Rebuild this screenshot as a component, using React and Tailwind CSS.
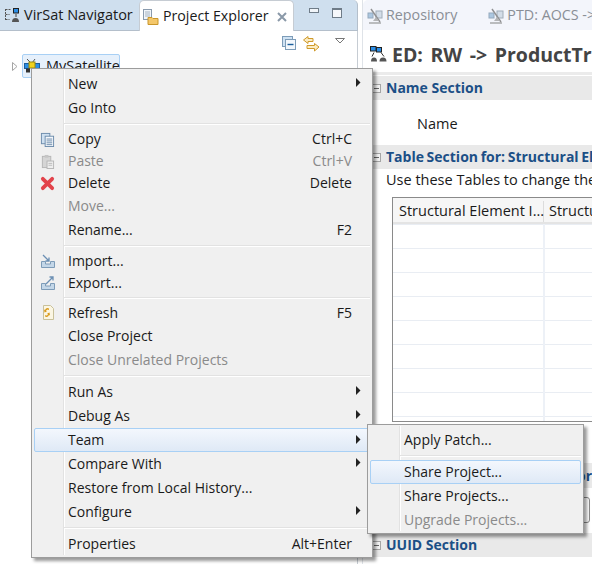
const font = { fontFamily: '"Open Sans", "Noto Sans", sans-serif' };

function Arrow() {
  return <svg width="6" height="9" viewBox="0 0 6 9" className="absolute right-[9px] top-[6px]"><path d="M1 0 L5.5 4.5 L1 9 Z" fill="#222" /></svg>;
}

function CopyIcon() {
  return (
    <svg width="15" height="15" viewBox="0 0 16 16">
      <rect x="1.5" y="1.5" width="9" height="11" fill="#cfe0f0" stroke="#6b8bab" />
      <rect x="5.5" y="4.5" width="9" height="11" fill="#f4f7fb" stroke="#6b8bab" />
      <path d="M7 7.5h6M7 9.5h6M7 11.5h6M7 13.5h6" stroke="#6b8bab" />
    </svg>
  );
}
function PasteIcon() {
  return (
    <svg width="15" height="15" viewBox="0 0 16 16">
      <rect x="2.5" y="2.5" width="9" height="12" fill="#d5d5d5" stroke="#b5b5b5" />
      <rect x="5" y="1" width="4" height="3" fill="#c5c5c5" />
      <rect x="7.5" y="7.5" width="7" height="8" fill="#eee" stroke="#b5b5b5" />
      <path d="M9 10h4M9 12h4" stroke="#bbb" />
    </svg>
  );
}
function DeleteIcon() {
  return (
    <svg width="15" height="15" viewBox="0 0 16 16">
      <path d="M3 3 L13 13 M13 3 L3 13" stroke="#e2434b" strokeWidth="4" strokeLinecap="round" />
    </svg>
  );
}
function ImportIcon() {
  return (
    <svg width="16" height="16" viewBox="0 0 16 16">
      <path d="M1.5 8.5v6h13v-6h-4v2.5h-5v-2.5z" fill="#c4d7e8" stroke="#7e9cb8" />
      <path d="M3 2 L9 8 M9 4.5v3.5h-3.5" fill="none" stroke="#6b8fb3" strokeWidth="1.3" />
    </svg>
  );
}
function ExportIcon() {
  return (
    <svg width="16" height="16" viewBox="0 0 16 16">
      <path d="M1.5 8.5v6h13v-6h-4v2.5h-5v-2.5z" fill="#c4d7e8" stroke="#7e9cb8" />
      <path d="M6 9 L13 2 M9.5 2h3.5v3.5" fill="none" stroke="#6b8fb3" strokeWidth="1.3" />
    </svg>
  );
}
function RefreshIcon() {
  return (
    <svg width="16" height="16" viewBox="0 0 16 16">
      <path d="M3.5 0.5h7l3 3v11h-10z" fill="#fbf6e3" stroke="#c9c19a" />
      <path d="M9 3.5a3 3 0 0 0-4 1.5l-1-.5 .5 3 2.5-1-1-.5a2 2 0 0 1 3-1z" fill="#d99a1c" />
      <path d="M5 11.5a3 3 0 0 0 4-1.5l1 .5-.5-3-2.5 1 1 .5a2 2 0 0 1-3 1z" fill="#d99a1c" />
    </svg>
  );
}
function NavIcon() {
  return (
    <svg width="16" height="15" viewBox="0 0 16 15" className="shrink-0">
      <path d="M1.5 1v11M1.5 1.5h5M1.5 6.5h4M1.5 11.5h4" stroke="#555" strokeDasharray="2 1" fill="none" />
      <rect x="9.5" y="0.5" width="5" height="4.5" fill="#2b8ee6" stroke="#222" />
      <path d="M12 6v3" stroke="#444" />
      <path d="M8 14 Q8 10 11.5 10 Q15 10 15 14 Z" fill="#555" />
    </svg>
  );
}
function ExplorerIcon() {
  return (
    <svg width="16" height="16" viewBox="0 0 16 16" className="shrink-0">
      <rect x="0.5" y="0.5" width="8" height="10" fill="#f1f5fa" stroke="#8a9bae" />
      <path d="M2 3h5M2 5h5M2 7h5" stroke="#a5b3c2" />
      <path d="M5 8.5h4l1 1h5v6h-10z" fill="#f4c76a" stroke="#c9962b" />
    </svg>
  );
}
function SatIcon() {
  return (
    <svg width="17" height="17" viewBox="0 0 17 17" className="shrink-0">
      <path d="M3 1 L7 5 M11 1 L8 5" stroke="#555" />
      <rect x="0.5" y="5.5" width="5" height="5" fill="#2b8ee6" stroke="#1c5f9e" />
      <rect x="10.5" y="5.5" width="5" height="5" fill="#2b8ee6" stroke="#1c5f9e" />
      <rect x="5" y="4" width="6" height="6" fill="#f1d21e" stroke="#9a8a10" />
      <rect x="2" y="10.5" width="4" height="4" fill="#333" />
      <rect x="7.5" y="11.5" width="7" height="5" fill="#fff" stroke="#555" />
      <path d="M9 13.5h4M9 15h4" stroke="#888" />
    </svg>
  );
}
function DisabledPinIcon() {
  return (
    <svg width="16" height="16" viewBox="0 0 16 16" className="opacity-70 shrink-0">
      <rect x="1" y="5" width="5" height="5" fill="#8fb4d6" stroke="#6f8ba5" />
      <rect x="9" y="3" width="6" height="7" fill="#c6d4e0" stroke="#7f8f9f" />
      <path d="M2 15h12" stroke="#888" strokeWidth="1.5" />
      <path d="M4 1 L13 14" stroke="#666" strokeWidth="1.4" />
      <path d="M6 13l3-4 3 4z" fill="#9a9a9a" />
    </svg>
  );
}
function EdIcon() {
  return (
    <svg width="17" height="17" viewBox="0 0 17 17" className="shrink-0 -mt-[1px]">
      <rect x="0.5" y="0.5" width="5.5" height="4.5" fill="#2b8ee6" stroke="#222" />
      <rect x="6.5" y="1.5" width="5" height="4.5" fill="#2b8ee6" stroke="#222" />
      <path d="M4 6.5l-2 4M11 6.5l3 4" stroke="#333" />
      <path d="M1 15.5 Q1 11.5 4 11.5 Q7 11.5 7 15.5 Z M9.5 15.5 Q9.5 11.5 13 11.5 Q16.5 11.5 16.5 15.5 Z" fill="#555" />
    </svg>
  );
}
function CollapseIcon() {
  return (
    <svg width="9" height="9" viewBox="0 0 9 9" className="shrink-0"><rect x="0.5" y="0.5" width="8" height="8" fill="#f3f3f3" stroke="#a5a5a5" /><path d="M2 4.5h5" stroke="#666" /></svg>
  );
}

function Sep() {
  return <div className="h-[2px] my-[3px] ml-[30px] bg-white border-t border-[#e2e2e2]" />;
}

function Item({ label, shortcut, disabled, arrow, icon, h = "h-[24px]" }) {
  return (
    <div className={"relative flex items-center " + h}>
      <div className="w-[32px] shrink-0 flex justify-center items-center pr-[5px]">{icon}</div>
      <span className={"pl-[2px] " + (disabled ? "text-[#8a8a8a]" : "text-[#1a1a1a]")}>{label}</span>
      {shortcut && <span className={"ml-auto pr-[18px] " + (disabled ? "text-[#8a8a8a]" : "text-[#1a1a1a]")}>{shortcut}</span>}
      {arrow && <Arrow />}
    </div>
  );
}

function Hover({ children }) {
  return (
    <div className="border border-[#a8d0f5] rounded-[2px] bg-gradient-to-b from-[#f3f7fd] to-[#dfe9f6]">
      <div className="-mx-[1px]">{children}</div>
    </div>
  );
}

function Section({ title, className = "", titleClass = "" }) {
  return (
    <div className={"h-[24px] bg-[#e9e9e9] flex items-center gap-[5px] pl-[9px] overflow-hidden shrink-0 text-[14px] " + className}>
      <CollapseIcon />
      <span className={"font-bold text-[#1b4f86] whitespace-nowrap " + titleClass}>{title}</span>
    </div>
  );
}

export default function App() {
  return (
    <div style={font} className="relative w-[592px] h-[564px] overflow-hidden bg-white flex text-[14.5px] text-[#1a1a1a] leading-none">
      {/* Left view */}
      <div className="w-[358px] shrink-0 flex flex-col">
        <div className="h-[31px] flex bg-[#cfdfee] border-b border-r border-[#b4bfcb] rounded-tr-[5px] shrink-0">
          <div className="w-[139px] shrink-0 flex items-center gap-[4px] pl-[4px] pt-[1px]">
            <NavIcon />
            <span className="whitespace-nowrap">VirSat Navigator</span>
          </div>
          <div className="w-[155px] shrink-0 -mb-[1px] h-[31px] flex items-center bg-white border-x border-t border-[#c6ccd3] rounded-t-[5px] pl-[3px] pt-[1px] gap-[4px] text-[14.2px]">
            <ExplorerIcon />
            <span className="whitespace-nowrap">Project Explorer</span>
            <svg width="10" height="10" viewBox="0 0 10 10" className="ml-[4px] shrink-0"><path d="M1 1l8 8M9 1l-8 8" stroke="#8a99a8" strokeWidth="2" fill="none" /></svg>
          </div>
          <div className="flex-1 flex items-start pt-[8px] pl-[15px] gap-[13px]">
            <div className="w-[10px] h-[5px] bg-[#f1f5f9] border border-[#6f7c88]" />
            <div className="w-[10px] h-[10px] bg-[#f6f8fb] border border-[#6f7c88] border-t-2" />
          </div>
        </div>
        <div className="relative flex-1 border-r border-[#c6ccd3]">
          <div className="flex items-start justify-end pr-[12px] pt-[5px] h-[23px]">
            <svg width="14" height="14" viewBox="0 0 14 14"><rect x="0.5" y="0.5" width="10" height="10" fill="#cfe2f3" stroke="#7d9cb8" /><rect x="3.5" y="3.5" width="10" height="10" fill="#f2f7fc" stroke="#7d9cb8" /><path d="M5.5 8.5h6" stroke="#1b5e9c" strokeWidth="1.4" /></svg>
            <svg width="17" height="16" viewBox="0 0 17 16" className="ml-[7px]"><path d="M0.5 4 L5 .5 V2.5 H10 V5.5 H5 V7.5 Z" fill="#fcecc4" stroke="#cf9a2a" /><path d="M16 11 L11.5 7.5 V9.5 H4 V12.5 H11.5 V15 Z" fill="#fcecc4" stroke="#cf9a2a" /></svg>
            <svg width="10" height="6" viewBox="0 0 10 6" className="ml-[15px] mt-[2px]"><path d="M.5 .5h9l-4.5 4.5z" fill="#fff" stroke="#777" /></svg>
          </div>
          <div className="flex items-start pl-[12px]">
            <svg width="6" height="9" viewBox="0 0 6 9" className="mt-[8px]"><path d="M.5 .5 L5 4.5 L.5 8.5 Z" fill="#fff" stroke="#a5a5a5" /></svg>
            <div className="ml-[4px] h-[24px] w-[98px] flex items-center gap-[5px] pl-[1px] border border-[#a8d0f5] rounded-[2px] bg-[#e6f0fb]">
              <SatIcon />
              <span className="whitespace-nowrap">MySatellite</span>
            </div>
          </div>
        </div>
      </div>

      {/* Gutter */}
      <div className="w-[4px] shrink-0 bg-white" />

      {/* Right editor */}
      <div className="flex-1 min-w-0 flex flex-col overflow-hidden border-l border-[#dfe3e8]">
        <div className="h-[30px] shrink-0 bg-[#f3f5fb] flex items-center pt-[1px] text-[14.3px] text-[#8a8f96] whitespace-nowrap overflow-hidden rounded-tl-[5px]">
          <div className="pl-[4px] flex items-center gap-[3px]"><DisabledPinIcon /><span>Repository</span></div>
          <div className="pl-[31px] flex items-center gap-[3px]"><DisabledPinIcon /><span>PTD: AOCS -&gt;</span></div>
        </div>
        <div className="h-[45px] shrink-0 flex items-center gap-[5px] pl-[7px] pt-[8px] border-b-[3px] border-[#ebebeb] whitespace-nowrap overflow-hidden">
          <EdIcon />
          <span className="font-bold text-[19.5px] text-[#444] [word-spacing:2.5px]">ED: RW -&gt; ProductTree</span>
        </div>
        <Section title="Name Section" className="mt-[1px]" />
        <div className="h-[45px] shrink-0 flex items-center pl-[54px] pt-[3px]">Name</div>
        <Section title="Table Section for: Structural Element" titleClass="[word-spacing:-1px]" />
        <div className="pl-[23px] pt-[4px] h-[28px] shrink-0 whitespace-nowrap overflow-hidden">Use these Tables to change the</div>
        <div className="ml-[29px] h-[225px] shrink-0 border border-[#8a8a8a] border-r-0 flex flex-col">
          <div className="h-[26px] shrink-0 flex border-b-2 border-[#e4e4e4] bg-[#f6f6f6] pt-[3px] whitespace-nowrap overflow-hidden">
            <div className="w-[151px] shrink-0 pl-[6px] flex items-center border-r border-[#dcdcdc]">Structural Element I...</div>
            <div className="pl-[5px] flex items-center">Structural</div>
          </div>
          <div className="flex-1 relative bg-white bg-[linear-gradient(#e9edf3_1px,transparent_1px)] bg-[length:100%_24px] bg-[position:0_24px]">
            <div className="absolute left-[150px] top-0 bottom-0 w-[2px] bg-[#edf1f7]" />
          </div>
        </div>
        <div className="mt-[41px] h-[25px] shrink-0 bg-[#e9e9e9] flex items-center justify-end text-[14px] font-bold text-[#1b4f86]">or</div>
        <div className="mt-[9px] mr-[2px] ml-auto w-[40px] h-[26px] shrink-0 border border-[#8a8a8a] rounded-[3px] flex items-center justify-end pr-[5px] text-[10px]">.</div>
        <Section title="UUID Section" className="mt-[10px]" />
      </div>

      {/* Context menu */}
      <div className="absolute left-[31px] top-[68px] w-[342px] h-[490px] bg-[#f0f0f0] border border-[#9c9c9c] shadow-[3px_3px_3px_rgba(0,0,0,0.4)] pt-[3px] px-[2px] whitespace-nowrap text-[14px]">
        <div className="absolute left-[31px] top-[1px] bottom-[2px] w-[2px] bg-white border-l border-[#e2e2e2]" />
        <div className="relative flex flex-col">
          <Item label="New" arrow />
          <Item label="Go Into" />
          <Sep />
          <Item label="Copy" shortcut="Ctrl+C" icon={<CopyIcon />} h="h-[22px]" />
          <Item label="Paste" shortcut="Ctrl+V" disabled icon={<PasteIcon />} h="h-[22px]" />
          <Item label="Delete" shortcut="Delete" icon={<DeleteIcon />} h="h-[22px]" />
          <Item label="Move..." disabled />
          <Item label="Rename..." shortcut="F2" />
          <Sep />
          <Item label="Import..." icon={<ImportIcon />} h="h-[22px]" />
          <Item label="Export..." icon={<ExportIcon />} h="h-[22px]" />
          <Sep />
          <Item label="Refresh" shortcut="F5" icon={<RefreshIcon />} h="h-[22px]" />
          <Item label="Close Project" />
          <Item label="Close Unrelated Projects" disabled />
          <Sep />
          <Item label="Run As" arrow />
          <Item label="Debug As" arrow />
          <Hover><Item label="Team" arrow h="h-[22px]" /></Hover>
          <Item label="Compare With" arrow />
          <Item label="Restore from Local History..." />
          <Item label="Configure" arrow />
          <Sep />
          <Item label="Properties" shortcut="Alt+Enter" />
        </div>
      </div>

      {/* Submenu */}
      <div className="absolute left-[367px] top-[424px] w-[217px] h-[110px] bg-[#f0f0f0] border border-[#9c9c9c] shadow-[3px_3px_3px_rgba(0,0,0,0.4)] pt-[3px] px-[2px] whitespace-nowrap text-[14px]">
        <div className="absolute left-[31px] top-[1px] bottom-[2px] w-[2px] bg-white border-l border-[#e2e2e2]" />
        <div className="relative flex flex-col">
          <Item label="Apply Patch..." />
          <Sep />
          <Hover><Item label="Share Project..." h="h-[22px]" /></Hover>
          <Item label="Share Projects..." />
          <Item label="Upgrade Projects..." disabled />
        </div>
      </div>
    </div>
  );
}
